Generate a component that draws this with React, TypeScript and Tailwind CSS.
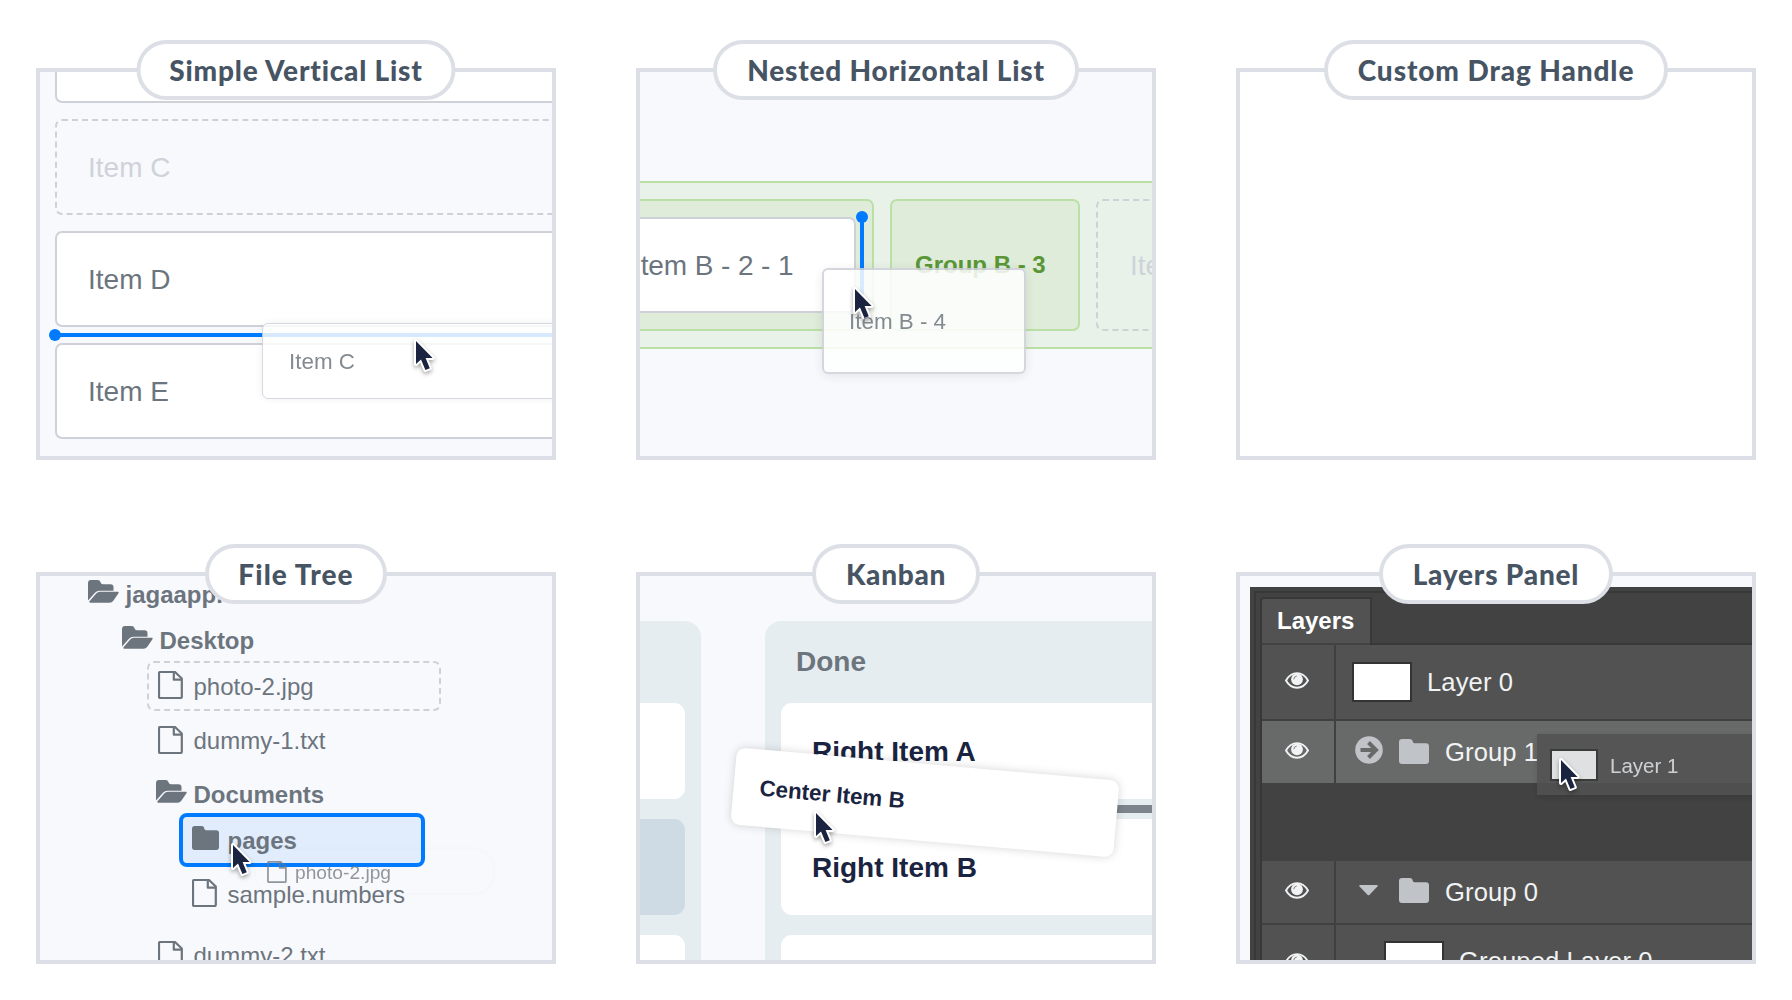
import type { ReactNode } from "react";

function Cursor({ className }: { className: string }) {
  return (
    <svg className={"absolute overflow-visible drop-shadow-[0_2px_2px_rgba(0,0,0,0.35)] " + className} width="17" height="29" viewBox="0 0 17 29">
      <path
        d="M0 0V23L5 18.6L9.4 29L13.8 27.2L9.6 17H16.6Z"
        fill="#1a2440"
        stroke="#fff"
        strokeWidth="4"
        strokeLinejoin="round"
        paintOrder="stroke"
      />
    </svg>
  );
}

function FolderOpenIcon() {
  return (
    <svg width="31" height="23" viewBox="0 0 31 23" fill="currentColor">
      <path d="M3 0H9.5Q12 0 12.5 2.3Q13 4.2 15 4.2H22.5Q25.5 4.2 25.5 7.5V10.7H11.5Q8.8 10.7 7 12.7L0 20.4V3Q0 0 3 0Z" />
      <path d="M11.8 11.7H30Q31.2 12 30.3 13.5L25.3 20.7Q24 22.7 21.5 22.7H2.5Q.6 22.4 1.7 21L8.2 13.6Q9.8 11.7 11.8 11.7Z" />
    </svg>
  );
}

function FolderIcon({ className }: { className: string }) {
  return (
    <svg className={className} viewBox="0 0 30 25" preserveAspectRatio="none" fill="currentColor">
      <path d="M3 0H10.5Q13.5 0 13.7 2.5Q13.9 4.3 15.5 4.3H27Q30 4.3 30 7.3V22Q30 25 27 25H3Q0 25 0 22V3Q0 0 3 0Z" />
    </svg>
  );
}

function FileIcon({ className }: { className: string }) {
  return (
    <svg className={className} viewBox="0 0 25 28" fill="none" stroke="currentColor" strokeWidth="2.2" strokeLinejoin="round">
      <path d="M2.2 1H17L23.8 7.500V25.8Q23.8 27 22.6 27H2.2Q1 27 1 25.8V2.2Q1 1 2.2 1Z" />
      <path d="M15.8 1V8.7H23.8" />
    </svg>
  );
}

function EyeIcon() {
  return (
    <svg width="24" height="17" viewBox="0 0 24 17" fill="none">
      <path d="M1 8.5C3.5 4 7.5 1.1 12 1.1S20.500 4 23 8.500C20.500 13 16.500 15.700 12 15.700S3.500 13 1 8.500Z" stroke="#f1f3f4" strokeWidth="1.900" />
      <circle cx="12" cy="7.300" r="5.900" fill="#f1f3f4" />
      <path d="M8.800 7.300Q8.900 4.300 11.800 4" stroke="#6a6a6a" strokeWidth="0.800" />
    </svg>
  );
}

function Demo({ title, pill, bg, children }: { title: string; pill: string; bg: string; children?: ReactNode }) {
  return (
    <section className="relative h-[392px] w-[520px]">
      <div className={"relative h-full overflow-hidden border-4 border-[#dcdfe6] " + bg}>{children}</div>
      <h2
        className={
          "absolute -top-7 left-1/2 flex h-[60px] -translate-x-1/2 items-center justify-center whitespace-nowrap rounded-[30px] border-4 border-[#dcdfe6] bg-white font-['Lato'] text-[28px] font-black text-[#475463] " +
          pill
        }
      >
        {title}
      </h2>
    </section>
  );
}

function VerticalList() {
  const row = "flex h-24 shrink-0 items-center rounded-[7px] border-2 border-[#cfd1d9] pl-[31px] pt-0.5 text-[28px]";
  return (
    <>
      <div className="-mt-[65px] ml-[15px] flex w-[560px] flex-col gap-4 text-[#6c757d]">
        <div className={row + " bg-white"} />
        <div className={row + " border-dashed text-[#cfd2da]"}>Item C</div>
        <div className={row + " bg-white"}>Item D</div>
        <div className={row + " bg-white"}>Item E</div>
      </div>
      <div className="absolute left-[15px] top-[261px] h-1 w-[500px] bg-[#007bff]" />
      <div className="absolute left-[9px] top-[257px] size-3 rounded-full bg-[#007bff]" />
      <div className="absolute left-[222px] top-[251px] flex h-[76px] w-[400px] items-center rounded-md border border-[#cfd1d9] bg-white pl-[26px] pt-0.5 text-[22.4px] text-[#6c757d] opacity-[0.84] shadow-[0_0_10px_rgba(0,0,0,0.08)]">
        Item C
      </div>
      <Cursor className="left-[376px] top-[269px]" />
    </>
  );
}

function HorizontalList() {
  return (
    <>
      <div className="-ml-4 mt-[109px] flex h-[168px] w-[640px] gap-4 border-2 border-[#bbe0a5] bg-[#e8f2e8] py-4">
        <div className="flex w-[248px] shrink-0 rounded-[7px] border-2 border-[#bbe0a5] bg-[#deecd9] py-4 pr-4">
          <div className="flex w-[230px] items-center whitespace-nowrap rounded-r-[7px] border-2 border-[#cfd1d9] bg-white pl-[3px] pt-px text-[28px] tracking-[-0.1px] text-[#6c757d]">
            Item B - 2 - 1
          </div>
        </div>
        <div className="flex w-[190px] shrink-0 items-center rounded-[7px] border-2 border-[#bbe0a5] bg-[#deecd9] pl-[23px] text-2xl font-bold text-[#5a9636]">
          Group B - 3
        </div>
        <div className="flex w-[180px] shrink-0 items-center rounded-[7px] border-2 border-dashed border-[#cfd1d9] pl-8 pt-px text-[28px] text-[#cfd2da]">
          Item B - 4
        </div>
      </div>
      <div className="absolute left-[220px] top-[145px] h-24 w-1 bg-[#007bff]" />
      <div className="absolute left-[216px] top-[139px] size-3 rounded-full bg-[#007bff]" />
      <div className="absolute left-[182px] top-[196px] h-[106px] w-[204px] rounded-md border-2 border-[#cfd1d9] bg-white opacity-[0.85] shadow-[0_2px_12px_rgba(0,0,0,0.1)]" />
      <Cursor className="left-[215px] top-[217px]" />
      <div className="absolute left-[209px] top-[197px] flex h-[106px] items-center text-[22.4px] text-[#6c757d] opacity-[0.84]">Item B - 4</div>
    </>
  );
}

function TreeRow({ icon, label, className }: { icon: "open" | "closed" | "file"; label: string; className: string }) {
  return (
    <div className={"flex items-center " + (icon === "file" ? "" : "font-bold ") + className}>
      <span className="flex w-[37.500px] shrink-0">
        {icon === "open" && <span className="-mt-[7px]"><FolderOpenIcon /></span>}
        {icon === "closed" && <FolderIcon className="-mt-1.5 ml-[1.500px] h-6 w-[27px]" />}
        {icon === "file" && <FileIcon className="-mt-[3px] ml-[2.200px] h-7 w-[25px]" />}
      </span>
      <span>{label}</span>
    </div>
  );
}

function FileTree() {
  return (
    <>
      <div className="flex flex-col text-2xl text-[#6c757d]">
        <TreeRow icon="open" label="jagaapp.com" className="-mt-1 h-[46px] pl-12" />
        <TreeRow icon="open" label="Desktop" className="h-[46px] pl-[82px]" />
        <TreeRow
          icon="file"
          label="photo-2.jpg"
          className="-mt-[3px] ml-[107px] h-[50px] w-[294px] rounded-[7px] border-2 border-dashed border-[#cfd1d9] pl-[7px] pt-px"
        />
        <TreeRow icon="file" label="dummy-1.txt" className="mt-[7px] h-[46px] pl-[116px]" />
        <TreeRow icon="open" label="Documents" className="mt-2 h-[46px] pl-[116px]" />
        <TreeRow
          icon="closed"
          label="pages"
          className="-mt-[5px] ml-[139px] h-[54px] w-[246px] rounded-lg border-4 border-[#007bff] bg-[#e1ecfd] pl-[7px] pt-px"
        />
        <TreeRow icon="file" label="sample.numbers" className="mt-1 h-[46px] pl-[150px] pt-px" />
        <TreeRow icon="file" label="dummy-2.txt" className="mt-4 h-[46px] shrink-0 pl-[116px]" />
      </div>
      <div className="absolute left-[216px] top-[274px] flex h-[43px] w-[237px] items-center rounded-[20px] pl-[11px] text-[19.2px] text-[#6c757d] opacity-75 shadow-[0_0_8px_rgba(0,0,0,0.04)]">
        <FileIcon className="h-[22px] w-5" />
        <span className="ml-2 pt-[3px]">photo-2.jpg</span>
      </div>
      <Cursor className="left-[193px] top-[269px]" />
    </>
  );
}

function Kanban() {
  return (
    <>
      <div className="mt-[45px] flex gap-16">
        <div className="flex h-[400px] w-[61px] shrink-0 flex-col gap-5 rounded-tr-[16px] bg-[#e6edf0] pr-4 pt-[82px]">
          <div className="h-24 shrink-0 rounded-r-[11px] bg-white" />
          <div className="h-24 shrink-0 rounded-r-[11px] bg-[#cedbe4]" />
          <div className="h-24 shrink-0 rounded-r-[11px] bg-white" />
        </div>
        <div className="flex h-[400px] w-[450px] shrink-0 flex-col rounded-tl-[16px] bg-[#e6edf0] pl-4">
          <div className="flex h-[82px] shrink-0 items-center pl-[15px] text-[28px] font-bold text-[#6c757d]">Done</div>
          <div className="flex shrink-0 flex-col gap-5 text-[28px] font-bold text-[#1a2440]">
            <div className="flex h-24 items-center rounded-[11px] bg-white pl-[31px] pt-px">Right Item A</div>
            <div className="flex h-24 items-center rounded-[11px] bg-white pl-[31px] pt-px">Right Item B</div>
            <div className="flex h-24 items-center rounded-[11px] bg-white pl-[31px] pt-px">Right Item C</div>
          </div>
        </div>
      </div>
      <div className="absolute left-[300px] top-[229px] h-2 w-[220px] bg-[#7c848c]" />
      <div className="absolute left-[93px] top-[188px] flex h-[77px] w-[384px] rotate-5 items-center rounded-[9px] bg-white pl-[26px] text-[22.4px] font-bold text-[#1a2440] shadow-[0_0_10px_rgba(0,0,0,0.17)]">
        Center Item B
      </div>
      <Cursor className="left-[176px] top-[237px]" />
    </>
  );
}

function LayerRow({ className, children }: { className: string; children: ReactNode }) {
  return (
    <div className={"flex shrink-0 " + className}>
      <div className="flex w-[74px] items-center justify-center border-r-2 border-[#404040] pb-[3px] pr-0.5">
        <EyeIcon />
      </div>
      <div className="flex items-center text-[25.6px] tracking-[0.1px] text-[#f1f3f4]">{children}</div>
    </div>
  );
}

function LayersPanel() {
  return (
    <>
      <div className="ml-2.5 mt-[11px] h-[400px] w-[540px] bg-[#424242] pl-1 pt-1">
        <div className="flex h-full flex-col border-l-2 border-t-2 border-[#383838] pl-1 pt-1">
          <div className="flex h-[46px] w-[112px] shrink-0 items-center rounded-tl-sm border-x-2 border-t-2 border-[#383838] bg-[#525252] pb-px pl-[15px] text-2xl font-bold text-white">
            Layers
          </div>
          <div className="flex grow flex-col border-l-2 border-[#383838]">
            <div className="ml-[108px] h-0.5 shrink-0 bg-[#383838]" />
            <LayerRow className="h-[76px] border-b-2 border-[#404040] bg-[#525252]">
              <div className="-mt-px ml-4 mr-[15px] h-10 w-[60px] border-2 border-[#333] bg-white" />
              Layer 0
            </LayerRow>
            <LayerRow className="h-[62px] bg-[#686a69]">
              <svg className="-mt-1 ml-[19px] text-[#c0c4c8]" width="28" height="28" viewBox="0 0 28 28">
                <circle cx="14" cy="14" r="13.800" fill="currentColor" />
                <path d="M5.500 14H21M13.500 6.500L21 14L13.500 21.500" fill="none" stroke="#686a69" strokeWidth="4" />
              </svg>
              <FolderIcon className="-mt-0.5 ml-4 mr-4 h-[25px] w-[30px] text-[#c0c4c8]" />
              Group 1
            </LayerRow>
            <LayerRow className="mt-[78px] h-16 border-b-2 border-[#404040] bg-[#525252]">
              <svg className="-mt-1 ml-[23px] text-[#c0c4c8]" width="19" height="11" viewBox="0 0 19 11" fill="currentColor">
                <path d="M1 0H18Q19.200 .4 18.400 1.400L10.300 10Q9.500 10.700 8.700 10L.6 1.400Q-.2 .4 1 0Z" />
              </svg>
              <FolderIcon className="-mt-1 ml-[21px] mr-4 h-[25px] w-[30px] text-[#c0c4c8]" />
              Group 0
            </LayerRow>
            <LayerRow className="h-[76px] bg-[#525252]">
              <div className="-mt-1 ml-12 mr-[15px] h-10 w-[60px] border-2 border-[#333] bg-white" />
              <span className="-mt-1">Grouped Layer 0</span>
            </LayerRow>
          </div>
        </div>
      </div>
      <div className="absolute left-[297px] top-[158px] flex h-[61px] w-[300px] items-center bg-[#525252] pl-[13px] text-[20.500px] text-[#e0e3e7] opacity-85 shadow-[0_2px_6px_rgba(0,0,0,0.15)]">
        <div className="mr-3 h-8 w-12 border-2 border-[#333] bg-[#f4f5f6]" />
        <span className="pt-[3px]">Layer 1</span>
      </div>
      <Cursor className="left-[321px] top-[184px]" />
    </>
  );
}

export default function App() {
  return (
    <main className="h-[1000px] w-[1792px] overflow-hidden bg-white pl-9 pt-[68px] font-['Liberation_Sans',sans-serif]">
      <div className="grid grid-cols-[520px_520px_520px] gap-x-20 gap-y-28">
        <Demo title="Simple Vertical List" pill="w-[319px] tracking-[0.8px]" bg="bg-[#f8f9fd]">
          <VerticalList />
        </Demo>
        <Demo title="Nested Horizontal List" pill="w-[366px] tracking-[0.8px]" bg="bg-[#f8f9fd]">
          <HorizontalList />
        </Demo>
        <Demo title="Custom Drag Handle" pill="w-[344px] tracking-[0.9px]" bg="bg-white" />
        <Demo title="File Tree" pill="w-[182px] tracking-[1.1px]" bg="bg-[#f8f9fd]">
          <FileTree />
        </Demo>
        <Demo title="Kanban" pill="w-[168px] tracking-[0.7px]" bg="bg-[#f8f9fd]">
          <Kanban />
        </Demo>
        <Demo title="Layers Panel" pill="w-[234px] tracking-[0.8px]" bg="bg-[#f8f9fd]">
          <LayersPanel />
        </Demo>
      </div>
    </main>
  );
}
